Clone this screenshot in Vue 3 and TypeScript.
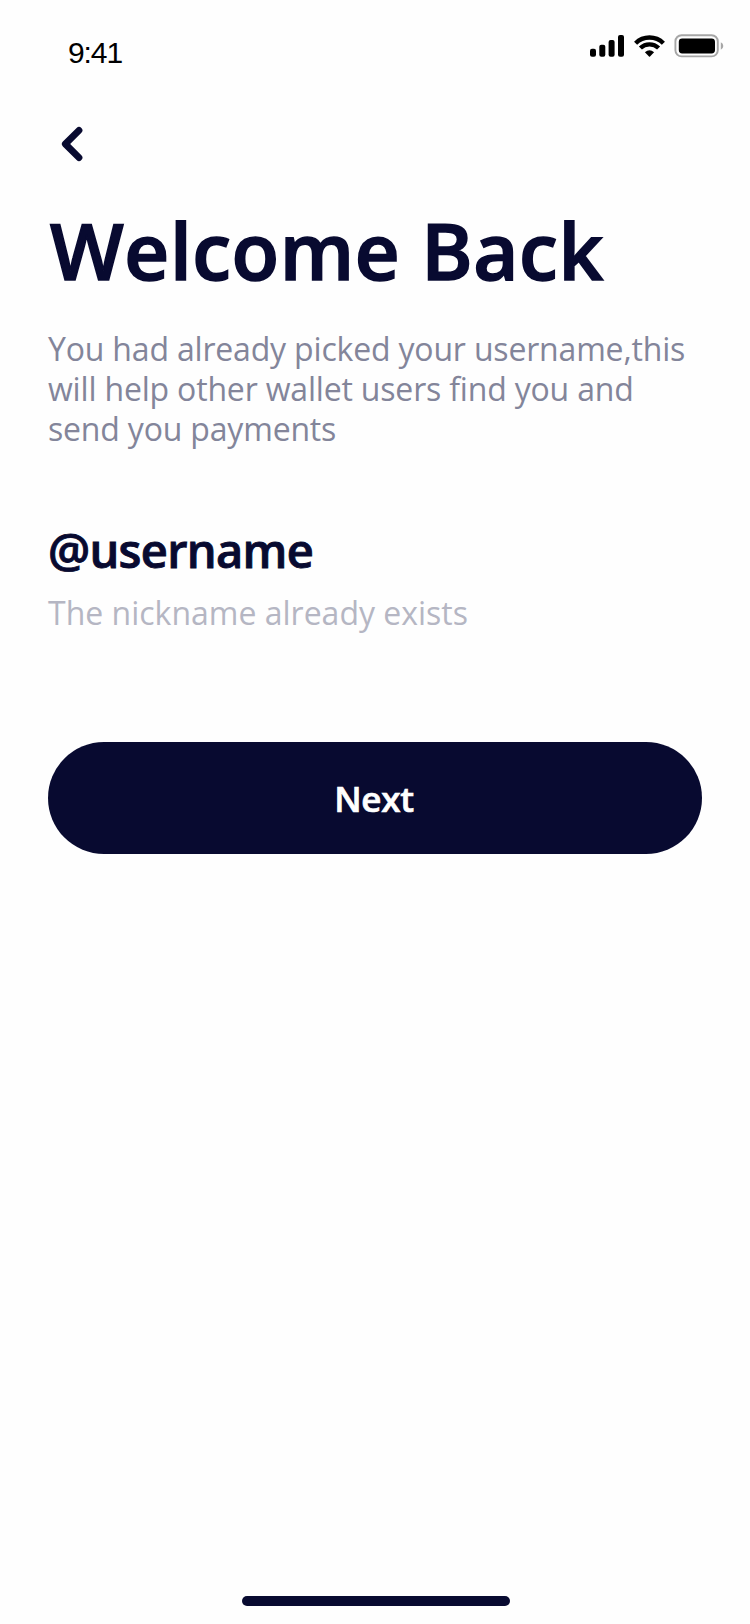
<script setup lang="ts">
const bars = [
  { x: 0, h: 8 },
  { x: 9.3, h: 12 },
  { x: 18.6, h: 16.7 },
  { x: 28, h: 21.7 },
]
const username: string = '@username'
</script>

<template>
  <main class="screen">
    <header class="status">
      <span class="time">9:41</span>
      <svg class="indicators" width="136" height="30" viewBox="590 30 136 30" aria-hidden="true">
        <rect v-for="b in bars" :key="b.x" :x="590 + b.x" :y="56.7 - b.h" width="6" :height="b.h" rx="2" />
        <g fill="none" stroke="#000" stroke-width="4.4">
          <path d="M635.6 43.2A19.8 19.8 0 0 1 663.4 43.2" />
          <path d="M640.4 48A13.2 13.2 0 0 1 658.6 48" />
        </g>
        <path d="M644.9 52.3Q649.5 48 654.1 52.3L650 56.4Q649.5 56.9 649 56.4Z" />
        <rect x="675.4" y="35.2" width="42.4" height="21.2" rx="6.2" fill="none" stroke="#a6a6a6" stroke-width="1.9" />
        <rect x="678.8" y="38.4" width="36.2" height="15" rx="3.4" />
        <path d="M720.8 42.3Q723.3 43.5 723.3 46T720.8 49.7Z" fill="#a6a6a6" />
      </svg>
    </header>

    <button class="back" type="button" aria-label="Back">
      <svg width="24" height="38" viewBox="0 0 24 38">
        <path d="M19 5.3L5.3 19L19 32.7" fill="none" stroke="#080a30" stroke-width="6.8" stroke-linecap="round" stroke-linejoin="round" />
      </svg>
    </button>

    <h1 class="title">Welcome Back</h1>
    <p class="intro">
      You had already picked your username,this<br />
      will help other wallet users find you and<br />
      send you payments
    </p>

    <div class="username">{{ username }}</div>
    <p class="hint">The nickname already exists</p>

    <button class="next" type="button">Next</button>
    <div class="home"></div>
  </main>
</template>

<style>
body {
  margin: 0;
  background: #fefefe;
}
</style>

<style scoped>
.screen {
  box-sizing: border-box;
  width: 750px;
  height: 1624px;
  padding: 0 48px 18px;
  display: flex;
  flex-direction: column;
  background: #fefefe;
  color: #080a30;
  font-family: "Open Sans", "Noto Sans", sans-serif;
}
.status {
  display: flex;
  justify-content: space-between;
  align-items: flex-start;
  height: 95px;
  padding: 30px 0 0 20px;
  margin-right: -24px;
  box-sizing: border-box;
}
.time {
  margin-top: 4px;
  color: #000;
  font: 30px/38px "Liberation Sans", Arial, sans-serif;
  letter-spacing: -1.1px;
}
.back {
  align-self: flex-start;
  margin: 30px 0 0 12px;
  padding: 0;
  border: 0;
  background: none;
  height: 38px;
}
.back svg {
  display: block;
}
.title {
  margin: 39px 0 0 2px;
  font-size: 78px;
  line-height: 96px;
  font-weight: 600;
  letter-spacing: 0.6px;
  -webkit-text-stroke: 1.6px #080a30;
  white-space: nowrap;
}
.intro {
  margin: 31px 0 0;
  color: #83859a;
  font-size: 32px;
  line-height: 40px;
  letter-spacing: -0.18px;
  white-space: nowrap;
}
.username {
  margin-top: 69px;
  font-size: 47px;
  line-height: 64px;
  font-weight: 600;
  letter-spacing: -0.7px;
  -webkit-text-stroke: 0.9px #080a30;
}
.hint {
  margin: 11px 0 0;
  color: #b5b6c3;
  font-size: 32px;
  line-height: 40px;
}
.next {
  margin-top: 109px;
  height: 112px;
  padding: 2px 2px 0 0;
  border: 0;
  border-radius: 56px;
  background: #080a30;
  color: #fff;
  font: 600 35px/40px "Open Sans", "Noto Sans", sans-serif;
  letter-spacing: -0.3px;
  -webkit-text-stroke: 0.7px #fff;
}
.home {
  align-self: center;
  width: 268px;
  height: 10px;
  margin: auto 0 0 2px;
  border-radius: 5px;
  background: #080a30;
}
</style>
